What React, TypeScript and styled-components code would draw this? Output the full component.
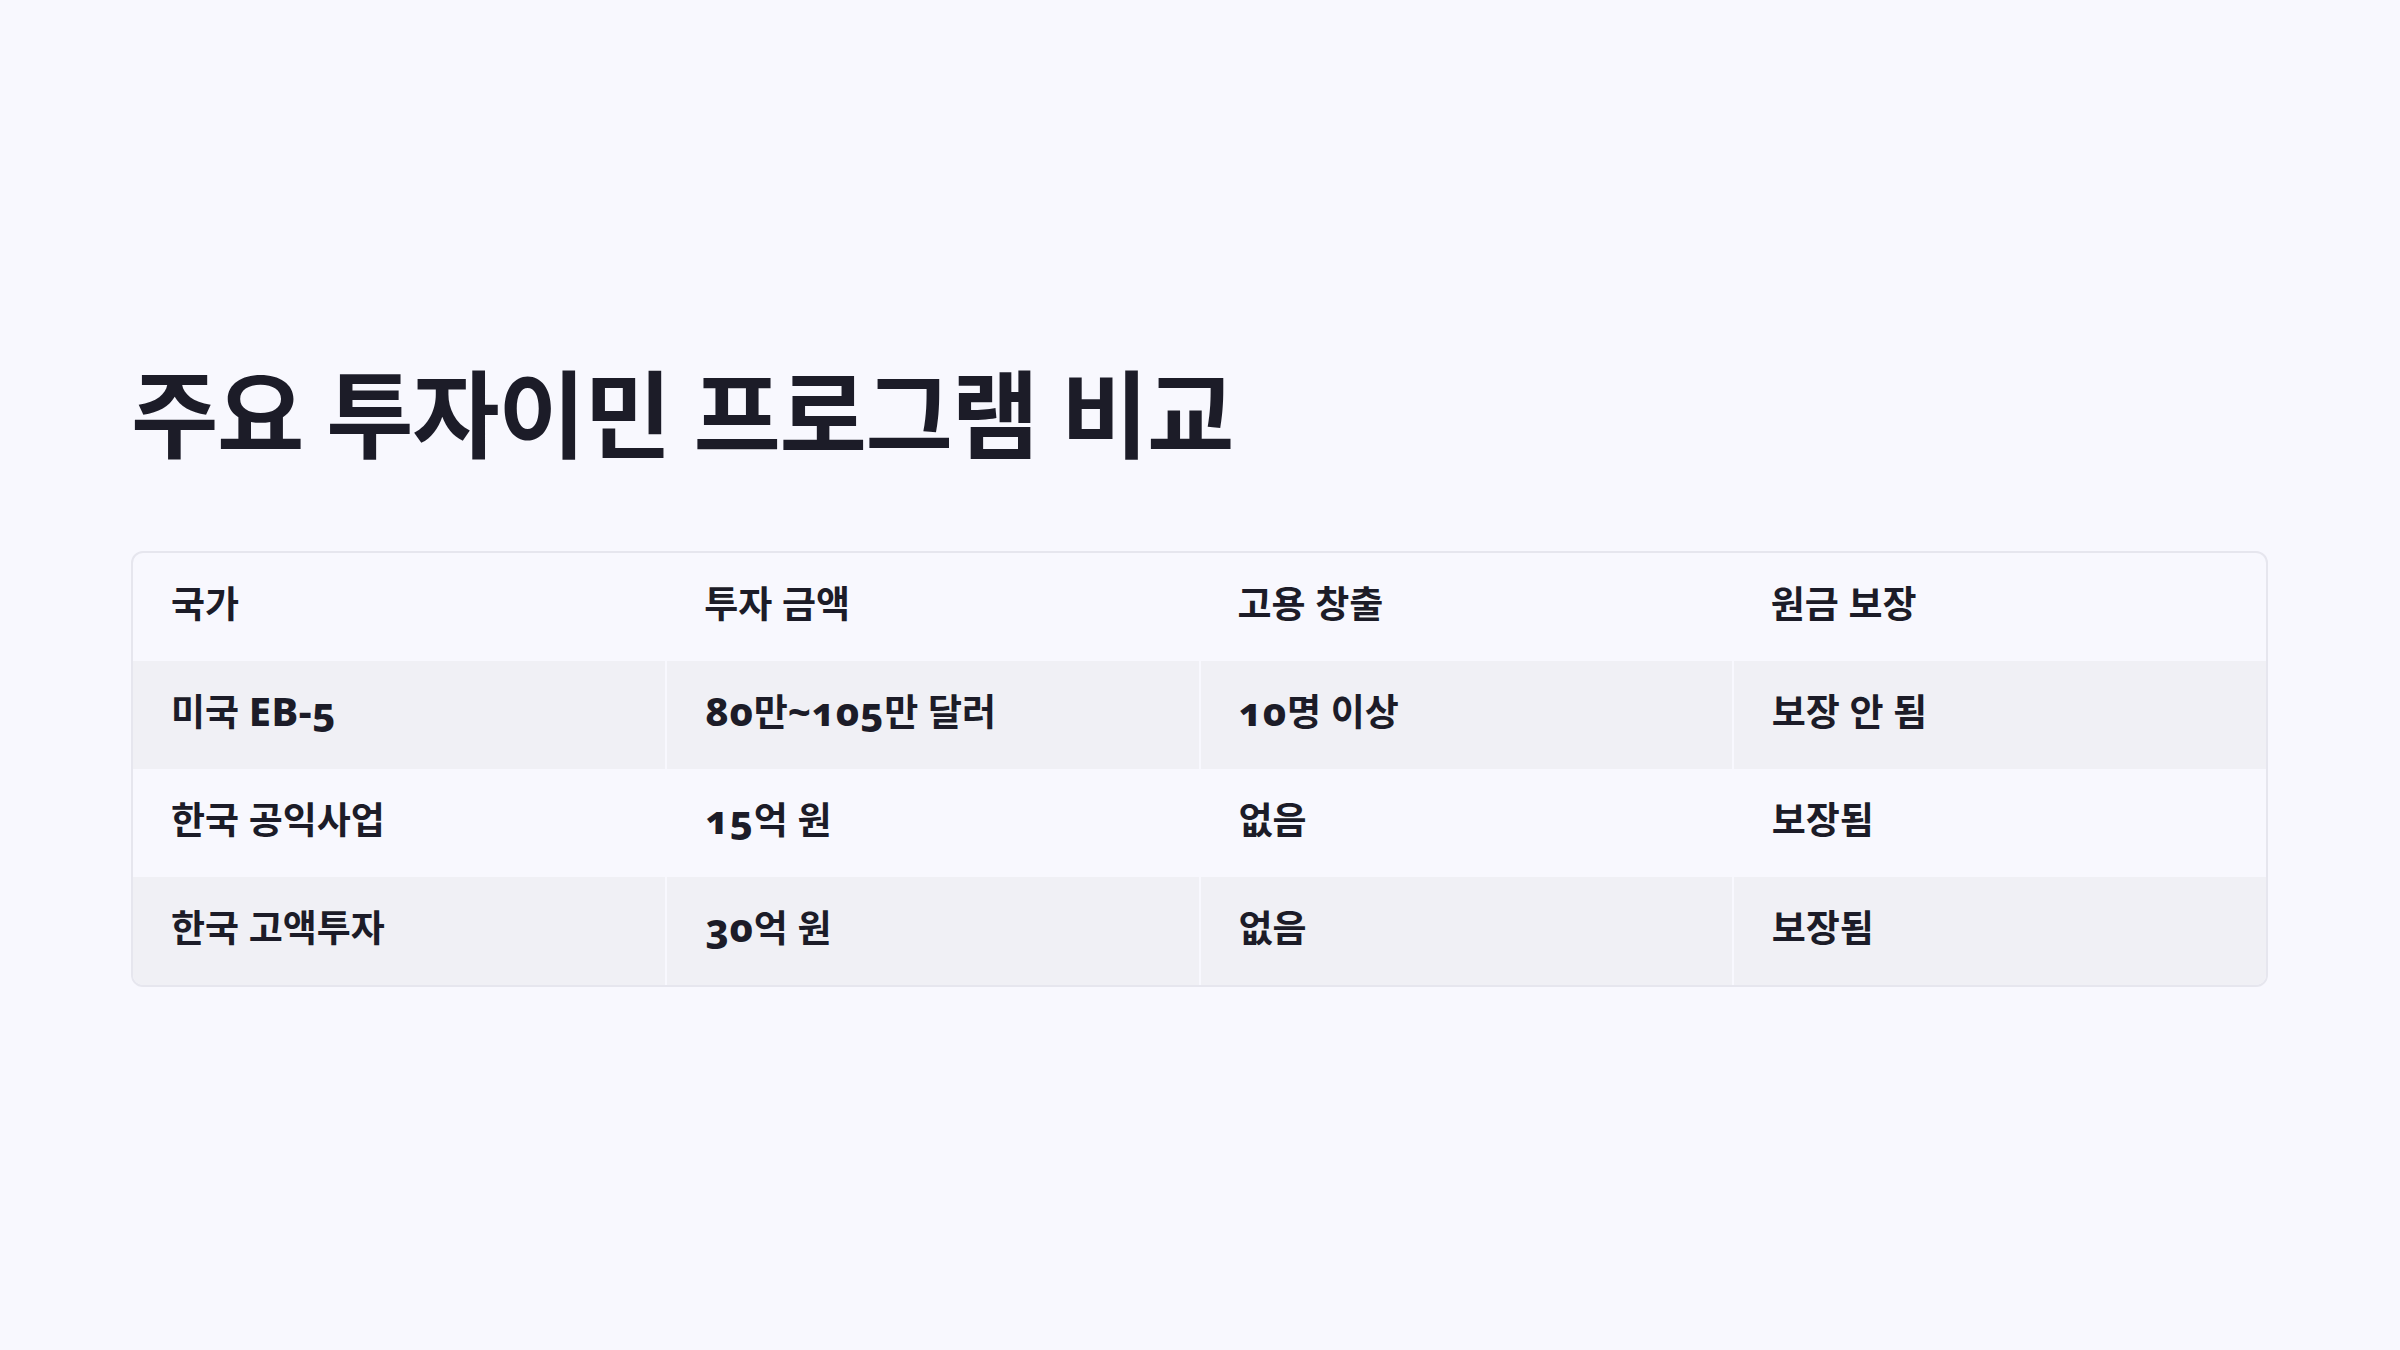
import type { FC } from 'react';
import styled, { createGlobalStyle } from 'styled-components';

const rows = [
	{ country: '미국 EB-5', amount: '80만~105만 달러', jobs: '10명 이상', guarantee: '보장 안 됨' },
	{ country: '한국 공익사업', amount: '15억 원', jobs: '없음', guarantee: '보장됨' },
	{ country: '한국 고액투자', amount: '30억 원', jobs: '없음', guarantee: '보장됨' },
];

const GlobalStyle = createGlobalStyle`
	html, body {
		margin: 0;
		padding: 0;
		background: #f8f8fe;
	}
	body {
		font-family: 'Noto Sans', 'Noto Sans CJK KR', sans-serif;
		color: #1c1c28;
	}
`;

// latin runs (numbers, EB-5) come out heavier than the hangul
const CellText: FC<{ text: string }> = ({ text }) => (
	<>
		{text.split(/([0-9A-Za-z~\-]+)/).map((part, i) =>
			i % 2 === 1 ? <Latin key={i}>{part}</Latin> : part,
		)}
	</>
);

export const App: FC = () => (
	<>
		<GlobalStyle />
		<Page>
			<Title>주요 투자이민 프로그램 비교</Title>
			<TableBox>
				<Table>
					<thead>
						<tr>
							<HeadCell>국가</HeadCell>
							<HeadCell>투자 금액</HeadCell>
							<HeadCell>고용 창출</HeadCell>
							<HeadCell>원금 보장</HeadCell>
						</tr>
					</thead>
					<tbody>
						{rows.map((r, i) => (
							<Row key={r.country} $shaded={i % 2 === 0}>
								<Cell><CellText text={r.country} /></Cell>
								<Cell><CellText text={r.amount} /></Cell>
								<Cell><CellText text={r.jobs} /></Cell>
								<Cell><CellText text={r.guarantee} /></Cell>
							</Row>
						))}
					</tbody>
				</Table>
			</TableBox>
		</Page>
	</>
);

export default App;

const Page = styled.main`
	box-sizing: border-box;
	width: 100%;
	height: 100vh;
	padding: 0 132px 6px 131px;
	display: flex;
	flex-direction: column;
	justify-content: center;
`;

const Title = styled.h1`
	margin: 0 0 80px;
	font-size: 95px;
	line-height: 1.2;
	font-weight: 700;
	letter-spacing: -1.4px;
	color: #1c1c28;
`;

const TableBox = styled.div`
	border: 2px solid #e6e6ee;
	border-radius: 12px;
	overflow: hidden;
`;

const Table = styled.table`
	width: 100%;
	border-collapse: collapse;
	table-layout: fixed;
	font-variant-numeric: oldstyle-nums;
`;

const HeadCell = styled.th`
	box-sizing: border-box;
	height: 108px;
	padding: 0 38px 10px;
	text-align: left;
	font-size: 37px;
	font-weight: 700;
	color: #1c1c28;
`;

const Row = styled.tr<{ $shaded: boolean }>`
	background: ${(p) => (p.$shaded ? '#f0f0f5' : 'transparent')};
`;

const Cell = styled.td`
	box-sizing: border-box;
	height: 108px;
	padding: 0 38px 10px;
	font-size: 37px;
	font-weight: 700;
	color: #1c1c28;
	border-left: 2px solid #f8f8fe;

	&:first-child {
		border-left: none;
	}
`;

const Latin = styled.span`
	font-family: 'Noto Sans', sans-serif;
	font-weight: 800;
	font-size: 40px;
	letter-spacing: 0.5px;
`;
